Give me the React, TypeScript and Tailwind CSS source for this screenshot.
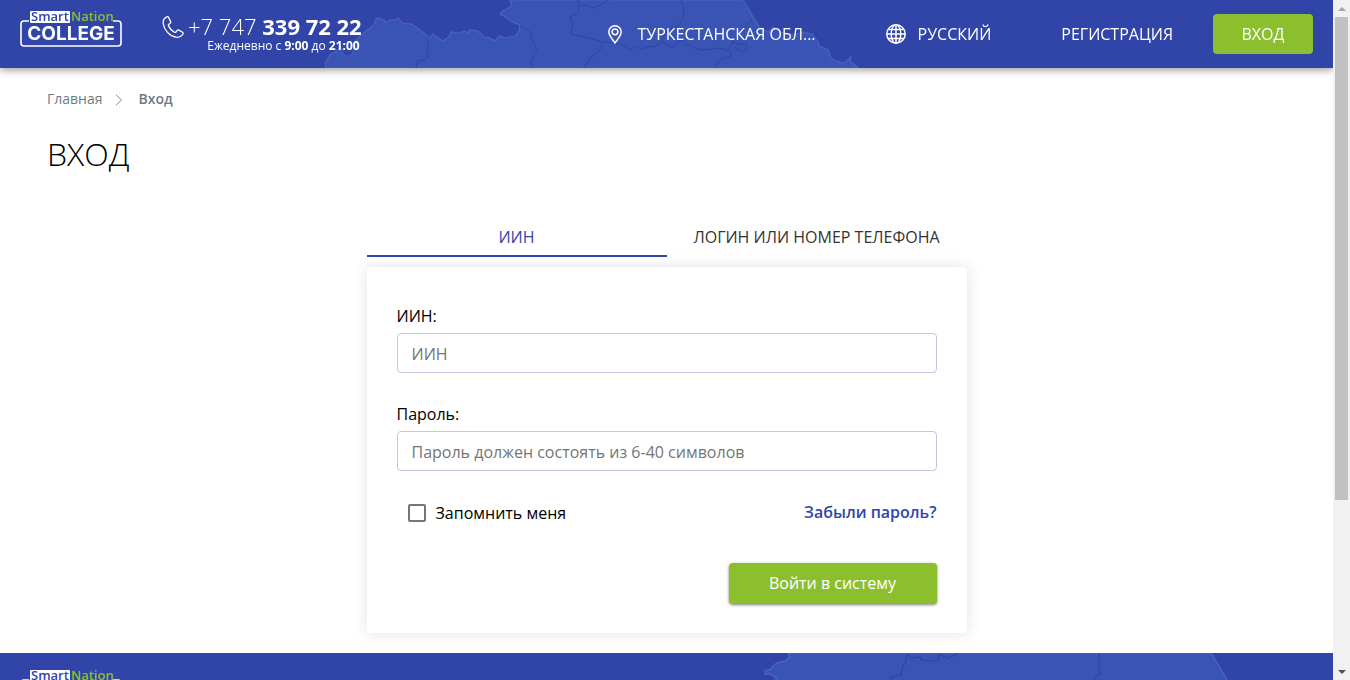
import React from "react";

function Logo() {
  return (
    <a href="#home" aria-label="SmartNation College" className="block h-9 w-[102px]">
      <svg viewBox="0 0 102 36" className="h-full w-full overflow-visible">
        <path
          d="M9 9H4a3 3 0 0 0-3 3v19a3 3 0 0 0 3 3h94a3 3 0 0 0 3-3V12a3 3 0 0 0-3-3h-5"
          fill="none"
          stroke="#fff"
          strokeWidth="1.6"
        />
        <rect x="10" y="-1" width="40" height="12" rx="1" fill="#fff" />
        <text x="11" y="9" fontSize="13" fontWeight="600" fill="#3145a8" className="font-['Open_Sans',sans-serif]">
          Smart
        </text>
        <text x="51" y="9" fontSize="13" fontWeight="600" fill="#8cbf2e" className="font-['Open_Sans',sans-serif]">
          Nation
        </text>
        <text
          x="51"
          y="28"
          textAnchor="middle"
          fontSize="19"
          fontWeight="700"
          fill="#fff"
          className="font-['Inter',sans-serif]"
        >
          COLLEGE
        </text>
      </svg>
    </a>
  );
}

function HeaderMap() {
  return (
    <svg viewBox="320 0 550 68" className="absolute top-0 left-80 h-[68px] w-[550px]" aria-hidden="true">
      <path
        d="M326 68L325 63L330 55L337 51L340 47L344 51L343 54L347 56L352 54L353 50L355 47L354 43L360 36L370 28L374 25L376 19L379 18L384 20L386 23L390 20L396 20L398 18L402 23L411 24L416 27L424 33L427 36L430 38L433 34L438 38L443 41L449 37L451 32L458 33L465 31L468 33L470 30L478 31L484 37L490 38L495 41L499 36L505 38L515 36L519 31L520 25L512 22L504 16L500 14L503 11L512 6L510 0H743L752 15L760 28L768 32L773 27L781 32L793 35L803 32L812 34L818 42L819 46L828 50L831 58L835 61L844 63L851 57L850 61L858 68Z"
        fill="#3a54b6"
        stroke="#4d63bb"
        strokeWidth="1.2"
      />
      <g fill="none" stroke="#2f459f" strokeWidth="1">
        <path d="M427 36L428 47L427 52L428 57L424 60L417 61L416 68" />
        <path d="M520 26L525 28L531 33L532 40L538 52L534 56L531 60L532 68" />
        <path d="M578 0L579 5L588 6L594 8L602 4L609 0" />
        <path d="M579 5L578 13L570 17L573 25L571 34L580 36L593 39L603 42L600 50L591 57L584 68" />
        <path d="M681 0L684 10L682 20L678 26L669 29L664 35L662 42L656 46L649 47L642 49L636 46L630 50L624 45L613 43L604 42" />
        <path d="M662 42L673 48L676 42L683 40L685 44L696 48L700 50L712 49L718 48L730 51L731 56L719 60L716 68" />
        <path d="M752 19L747 25L741 32L733 42L728 49" />
        <path d="M731 42L740 44L746 44L747 49L742 52L734 47" />
      </g>
      <path d="M343 49L349 50L353 48L352 54L347 56L343 53Z" fill="#3145a8" />
    </svg>
  );
}

function FooterMap() {
  return (
    <svg viewBox="760 0 480 120" className="absolute top-0 left-[760px] h-[120px] w-[480px]" aria-hidden="true">
      <path
        d="M788 0L790 4L785 8L777 10L773 13L771 16L765 18V21L770 21L777 25L774 28L780 60L830 100L900 120H1240L1227 27L1211 0Z"
        fill="#3a54b6"
        stroke="#4d63bb"
        strokeWidth="1.5"
      />
      <g fill="none" stroke="#2f459f" strokeWidth="1.2">
        <path d="M890 28L892 24L901 22L903 12L905 11L907 1L911 5L920 4L921 7L934 8L938 8L939 1L949 5L958 0" />
        <path d="M1099 0V20L1100 21L1095 24L1094 28" />
      </g>
    </svg>
  );
}

function PhoneIcon() {
  return (
    <svg viewBox="0 0 22 22" className="h-[22px] w-[22px]" fill="none" stroke="#fff" strokeWidth="1.3" strokeLinejoin="round" aria-hidden="true">
      <path d="M4.7.8C2 2.2.8 4.600 1.200 7.500c.8 6.500 6.300 12.600 12.800 13.700 3 .4 5.600-.8 7-3.400.3-.6.1-1.100-.4-1.500l-3.800-2.200c-.6-.3-1.200-.2-1.600.3l-1.300 1.700c-.3.400-.8.400-1.200.2C9.800 14.900 7.600 12.500 6.400 9.600c-.2-.5 0-.9.4-1.200L8.300 7c.4-.4.5-.9.3-1.400L6.500 1.300C6.100.7 5.400.4 4.700.8Z" />
    </svg>
  );
}

function PinIcon() {
  return (
    <svg viewBox="0 0 14 19" className="h-[19px] w-[14px]" fill="none" stroke="#fff" strokeWidth="1.5" aria-hidden="true">
      <path d="M7 .8C3.500.8.8 3.500.8 6.900c0 2.100 1.100 3.900 2.200 5.500L7 18l4-5.600c1.100-1.600 2.200-3.400 2.200-5.500C13.200 3.500 10.500.8 7 .8Z" />
      <circle cx="7" cy="6.800" r="2.900" />
    </svg>
  );
}

function GlobeIcon() {
  return (
    <svg viewBox="0 0 20 20" className="h-5 w-5" fill="none" stroke="#fff" strokeWidth="1.5" aria-hidden="true">
      <circle cx="10" cy="10" r="9.200" />
      <ellipse cx="10" cy="10" rx="4.800" ry="9.200" />
      <path d="M10 .8v18.400M.8 10h18.400M2.200 5.500h15.600M2.200 14.500h15.600" />
    </svg>
  );
}

function Header() {
  return (
    <header className="sticky top-0 z-10 flex h-[68px] items-center bg-[#3145a8] px-5 text-white shadow-[0_2px_8px_rgba(0,0,0,0.4)]">
      <HeaderMap />
      <div className="relative flex w-full items-center">
        <div className="-mt-2">
          <Logo />
        </div>
        <a href="tel:+77473397222" className="ml-10 flex items-start gap-1">
          <span className="pt-0.5">
            <PhoneIcon />
          </span>
          <span className="flex flex-col items-end">
            <span className="text-[22px] leading-6 font-light whitespace-nowrap">
              +7 747 <b className="font-bold">339 72 22</b>
            </span>
            <span className="pr-0.5 text-[12px] leading-4 whitespace-nowrap">
              Ежедневно с <b className="font-bold">9:00</b> до <b className="font-bold">21:00</b>
            </span>
          </span>
        </a>
        <nav className="ml-auto flex items-center text-base leading-6">
          <button type="button" className="mr-[70px] flex items-center gap-[15px] whitespace-nowrap">
            <PinIcon />
            ТУРКЕСТАНСКАЯ ОБЛ...
          </button>
          <button type="button" className="mr-[70px] flex items-center gap-3">
            <GlobeIcon />
            РУССКИЙ
          </button>
          <a href="#register" className="mr-10">
            РЕГИСТРАЦИЯ
          </a>
          <a href="#login" className="flex h-10 w-[100px] items-center justify-center rounded bg-[#8cbf2e]">
            ВХОД
          </a>
        </nav>
      </div>
    </header>
  );
}

function Breadcrumbs() {
  return (
    <nav aria-label="Навигация" className="flex items-center text-sm leading-5 text-[#6c7a86]">
      <a href="#home">Главная</a>
      <svg viewBox="0 0 8 12" className="mt-0.5 mr-4 ml-3 h-3 w-2" fill="none" stroke="#7d8a97" aria-hidden="true">
        <path d="M1 .8L6.500 6L1 11.200" />
      </svg>
      <span className="font-semibold" aria-current="page">
        Вход
      </span>
    </nav>
  );
}

const inputClass =
  "mt-1 block h-10 w-full rounded border border-[#c0c7e2] bg-white px-3.5 pt-0.5 text-base text-black outline-none placeholder:text-[#757575]";

function LoginForm() {
  return (
    <form
      className="mt-2.5 rounded bg-white px-[30px] pt-9 pb-[29px] text-base shadow-[0_0_15px_rgba(44,62,80,0.15)]"
      onSubmit={(e) => e.preventDefault()}
    >
      <label htmlFor="iin" className="block leading-[26px]">
        ИИН:
      </label>
      <input id="iin" type="text" placeholder="ИИН" className={inputClass} />
      <label htmlFor="password" className="mt-7 block leading-[26px]">
        Пароль:
      </label>
      <input id="password" type="password" placeholder="Пароль должен состоять из 6-40 символов" className={inputClass} />
      <div className="mt-7 flex items-start justify-between leading-7">
        <label className="flex items-center gap-2.5 pl-[11px]">
          <input
            type="checkbox"
            className="h-[18px] w-[18px] appearance-none rounded-xs border-2 border-[#757575] bg-white checked:bg-[#3145a8]"
          />
          Запомнить меня
        </label>
        <a href="#restore" className="leading-[26px] font-semibold text-[#3145a8]">
          Забыли пароль?
        </a>
      </div>
      <div className="mt-9 flex justify-end">
        <button
          type="submit"
          className="h-[41px] w-[208px] rounded bg-[#8cbf2e] pb-0.5 text-white shadow-[0_1px_3px_rgba(0,0,0,0.5)]"
        >
          Войти в систему
        </button>
      </div>
    </form>
  );
}

function ScrollRail() {
  return (
    <div aria-hidden="true" className="flex w-[17px] shrink-0 flex-col items-center bg-[#f1f1f1]">
      <div className="flex h-[17px] items-center">
        <svg viewBox="0 0 8 4" className="h-1 w-2">
          <path d="M0 4L4 0L8 4Z" fill="#a3a3a3" />
        </svg>
      </div>
      <div className="h-[71%] w-[13px] bg-[#c1c1c1]" />
      <div className="mt-auto flex h-[17px] items-center">
        <svg viewBox="0 0 8 4" className="h-1 w-2">
          <path d="M0 0L4 4L8 0Z" fill="#505050" />
        </svg>
      </div>
    </div>
  );
}

export default function App() {
  return (
    <div className="flex h-screen bg-white font-['Open_Sans',sans-serif] text-black">
      <div className="min-w-0 flex-1 overflow-x-hidden overflow-y-auto [scrollbar-width:none]">
        <Header />
        <main className="px-[47px] pt-[21px] pb-5">
          <Breadcrumbs />
          <h1 className="mt-[21px] text-[32px] leading-[48px] font-light">ВХОД</h1>
          <div className="mx-auto mt-[39px] max-w-[600px]">
            <div role="tablist" className="grid grid-cols-2 text-base leading-6">
              <button
                type="button"
                role="tab"
                aria-selected="true"
                className="h-10 border-b-2 border-[#3145a8] pt-0.5 text-[#3145a8]"
              >
                ИИН
              </button>
              <button
                type="button"
                role="tab"
                aria-selected="false"
                className="h-10 border-b-2 border-transparent pt-0.5 text-[#333]"
              >
                ЛОГИН ИЛИ НОМЕР ТЕЛЕФОНА
              </button>
            </div>
            <LoginForm />
          </div>
        </main>
        <footer className="relative h-[120px] overflow-hidden bg-[#3145a8] px-5 pt-[18px]">
          <FooterMap />
          <Logo />
        </footer>
      </div>
      <ScrollRail />
    </div>
  );
}
